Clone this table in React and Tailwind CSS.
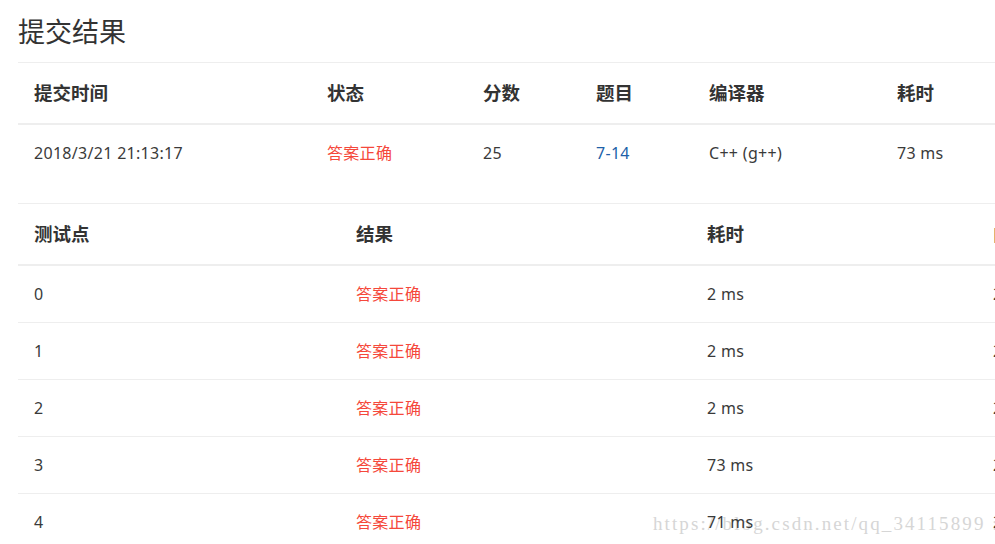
const font = { fontFamily: '"Noto Sans", "Noto Sans CJK SC", sans-serif' }

const summary = [
  { label: '提交时间', w: 293, value: '2018/3/21 21:13:17' },
  { label: '状态', w: 156, value: '答案正确', red: true },
  { label: '分数', w: 113, value: '25' },
  { label: '题目', w: 113, value: '7-14', link: true },
  { label: '编译器', w: 188, value: 'C++ (g++)' },
  { label: '耗时', w: 160, value: '73 ms' },
  { label: '内存', w: 160, value: '384 KB' },
]

const cases = [
  { id: '0', time: '2 ms' },
  { id: '1', time: '2 ms' },
  { id: '2', time: '2 ms' },
  { id: '3', time: '73 ms' },
  { id: '4', time: '71 ms' },
]

function Cell({ c }) {
  if (c.red) return <span className="text-[#f5483b]">{c.value}</span>
  if (c.link) return <span className="text-[#205fa8]">{c.value}</span>
  return <span>{c.value}</span>
}

export default function App() {
  return (
    <div className="w-[995px] h-[544px] overflow-hidden bg-white text-[#333] relative" style={font}>
      {/* watermark sits under the table text */}
      <div className="absolute left-[653px] top-[510px] text-[19px] text-[#d6d6d6] tracking-[2.1px] whitespace-nowrap" style={{ fontFamily: '"Liberation Serif", serif' }}>
        https://blog.csdn.net/qq_34115899 :
      </div>

      <div className="relative pl-[18px] w-[1300px]">
        <h1 className="text-[27px] leading-[32px] pt-[16px] pb-[14px] font-normal">提交结果</h1>

        {/* summary table */}
        <div className="border-t border-[#eee]">
          <div className="flex h-[62px] items-center border-b-2 border-[#eee]">
            {summary.map(c => (
              <div key={c.label} className="pl-4 text-[18.5px] font-bold" style={{ width: c.w }}>{c.label}</div>
            ))}
          </div>
          <div className="flex h-[56px] items-center text-[16px] tracking-[0.3px] text-[#3a3a3a]">
            {summary.map(c => (
              <div key={c.label} className="pl-4" style={{ width: c.w }}><Cell c={c} /></div>
            ))}
          </div>
        </div>

        {/* test cases */}
        <div className="mt-[22px] border-t border-[#eee]">
          <div className="flex h-[62px] items-center border-b-2 border-[#eee] text-[18.5px] font-bold">
            <div className="w-[322px] pl-4">测试点</div>
            <div className="w-[351px] pl-4">结果</div>
            <div className="w-[286px] pl-4">耗时</div>
            <div className="w-[200px] pl-4">内存</div>
          </div>
          {cases.map(r => (
            <div key={r.id} className="flex h-[57px] items-center border-b border-[#eee] text-[16px] tracking-[0.3px] text-[#3a3a3a]">
              <div className="w-[322px] pl-4">{r.id}</div>
              <div className="w-[351px] pl-4 text-[#f5483b]">答案正确</div>
              <div className="w-[286px] pl-4">{r.time}</div>
              <div className="w-[200px] pl-4">256 KB</div>
            </div>
          ))}
        </div>
      </div>
    </div>
  )
}
